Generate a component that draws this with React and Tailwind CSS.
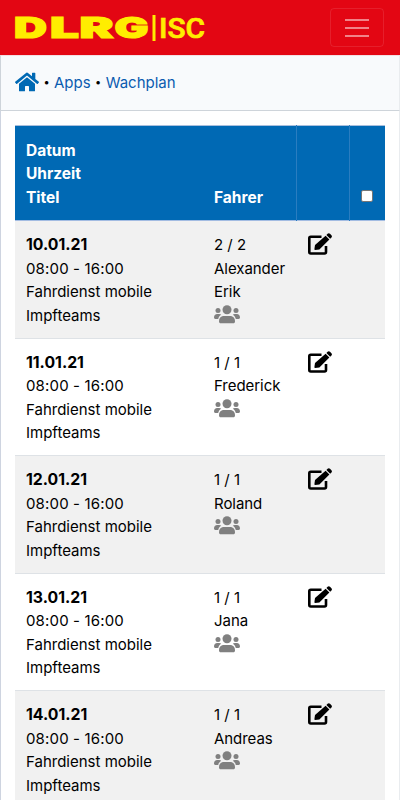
import { FaHome } from "react-icons/fa";

const shifts = [
  { date: "10.01.21", count: "2 / 2", drivers: ["Alexander", "Erik"] },
  { date: "11.01.21", count: "1 / 1", drivers: ["Frederick"] },
  { date: "12.01.21", count: "1 / 1", drivers: ["Roland"] },
  { date: "13.01.21", count: "1 / 1", drivers: ["Jana"] },
  { date: "14.01.21", count: "1 / 1", drivers: ["Andreas"] },
];

function Logo() {
  return (
    <svg width="200" height="40" viewBox="0 0 200 40" fill="#ffed00">
      <g
        fontSize="28.5"
        fontWeight="900"
        stroke="#ffed00"
        strokeWidth="1.2"
        className="font-[Inter,sans-serif]"
      >
        <text x="0" y="30" textLength="33" lengthAdjust="spacingAndGlyphs">D</text>
        <text x="36" y="30" textLength="29" lengthAdjust="spacingAndGlyphs">L</text>
        <text x="65.5" y="30" textLength="34" lengthAdjust="spacingAndGlyphs">R</text>
        <text x="100.5" y="30" textLength="34" lengthAdjust="spacingAndGlyphs">G</text>
      </g>
      <rect x="138.5" y="7" width="3" height="26" />
      <text
        x="145"
        y="30"
        fontSize="28"
        fontWeight="500"
        textLength="46"
        lengthAdjust="spacingAndGlyphs"
        stroke="#ffed00"
        strokeWidth="0.7"
        className="font-[Roboto,sans-serif]"
      >
        ISC
      </text>
    </svg>
  );
}

// Three people, the middle one in front
function UsersIcon() {
  return (
    <svg width="26" height="19" viewBox="0 0 26 19" fill="#808080">
      <circle cx="13" cy="4.8" r="4.5" />
      <circle cx="4" cy="5.6" r="2.5" />
      <circle cx="22" cy="5.6" r="2.5" />
      <path d="M5 16.5c0-4 2.3-5.5 5.2-5.5h5.6c2.9 0 5.2 1.5 5.2 5.5 0 1.1-.7 1.8-1.8 1.8H6.800C5.700 18.300 5 17.600 5 16.500z" />
      <path d="M0 12.500C0 10.400 1.300 9.100 3.200 9.100h2c.8 0 1.500.2 2 .6C5.600 10.700 4.600 12.100 4.200 13.900H1.300C.5 13.900 0 13.400 0 12.500z" />
      <path d="M26 12.500c0-2.100-1.300-3.400-3.200-3.400h-2c-.8 0-1.500.2-2 .6 1.600 1 2.600 2.400 3 4.200h2.900c.8 0 1.300-.5 1.300-1.400z" />
    </svg>
  );
}

function EditIcon() {
  return (
    <svg width="24" height="22" viewBox="0 0 24 22">
      <path
        d="M13.500 3.800H2.800a1.500 1.500 0 0 0-1.500 1.500v13.700a1.500 1.500 0 0 0 1.500 1.500h13.700a1.500 1.500 0 0 0 1.500-1.500v-6"
        fill="none"
        stroke="black"
        strokeWidth="2.600"
      />
      <path d="M17.600 2.700l3.800 3.800L11.400 16.400l-4.300.6c-.4 0-.7-.3-.7-.7l.6-4.200z" />
      <path d="M18.400 1.900L19.600.8c.7-.7 1.700-.7 2.400 0l1.400 1.400c.7.700.7 1.700 0 2.400l-1.200 1.100z" />
    </svg>
  );
}

function Header() {
  return (
    <header className="flex h-[55px] items-center justify-between bg-[#e30613] pl-3.5 pr-4">
      <Logo />
      <button
        type="button"
        className="flex h-[39px] w-[54px] flex-col items-center justify-center gap-[6px] rounded border border-white/10"
      >
        <span className="h-[2px] w-6 bg-white/50" />
        <span className="h-[2px] w-6 bg-white/50" />
        <span className="h-[2px] w-6 bg-white/50" />
      </button>
    </header>
  );
}

function Breadcrumb() {
  return (
    <nav className="flex h-14 items-center border border-[#ced4da] border-t-[#f3dfe3] border-r-[#e9ecef] bg-[#f8fafc] pl-3.5 text-[#0b5cb0]">
      <a href="#">
        <FaHome className="mb-[3px] size-6 text-[#0069b4]" />
      </a>
      <span className="w-[15px] text-center text-[11px] text-black">•</span>
      <a href="#">Apps</a>
      <span className="w-[15px] text-center text-[11px] text-black">•</span>
      <a href="#">Wachplan</a>
    </nav>
  );
}

export default function App() {
  return (
    <div className="h-[800px] overflow-hidden bg-white font-[Inter,sans-serif] text-[15px] leading-[23.5px] text-black">
      <Header />
      <Breadcrumb />

      <main className="h-[689px] overflow-hidden border-x border-l-[#ced4e0] border-r-[#e9ecef] px-3.5 pt-3.5">
        <table className="w-[370px] table-fixed border-collapse">
          <colgroup>
            <col className="w-[187px]" />
            <col className="w-[94px]" />
            <col className="w-[53px]" />
            <col className="w-[36px]" />
          </colgroup>
          <thead>
            <tr className="h-[95px] border-y border-t-[#a9bfdd] border-b-[#a3bce2] bg-[#0069b4] text-left align-bottom text-[15.5px] font-bold text-white">
              <th className="px-[11px] pb-[11px]">
                Datum
                <br />
                Uhrzeit
                <br />
                Titel
              </th>
              <th className="px-3 pb-[11px]">Fahrer</th>
              <th className="border-l border-[#2a7dc0]" />
              <th className="border-l border-[#2a7dc0] pb-[18px] pl-[11px]">
                <input
                  type="checkbox"
                  className="block size-3 appearance-none rounded-[2px] border border-[#767676] bg-white"
                />
              </th>
            </tr>
          </thead>
          <tbody>
            {shifts.map((shift) => (
              <tr
                key={shift.date}
                className="h-[117.6px] border-b border-[#dee2e6] align-top odd:bg-[#f1f1f1]"
              >
                <td className="px-[11px] pt-3">
                  <b className="text-[15.8px]">{shift.date}</b>
                  <br />
                  <span className="tracking-[0.15px]">08:00 - 16:00</span>
                  <br />
                  Fahrdienst mobile
                  <br />
                  Impfteams
                </td>
                <td className="pl-3 pt-3">
                  {shift.count}
                  {shift.drivers.map((name) => (
                    <div key={name} className="tracking-[-0.05px]">{name}</div>
                  ))}
                  <div className="pt-px">
                    <UsersIcon />
                  </div>
                </td>
                <td className="pl-3 pt-3">
                  <EditIcon />
                </td>
                <td />
              </tr>
            ))}
          </tbody>
        </table>
      </main>
    </div>
  );
}
